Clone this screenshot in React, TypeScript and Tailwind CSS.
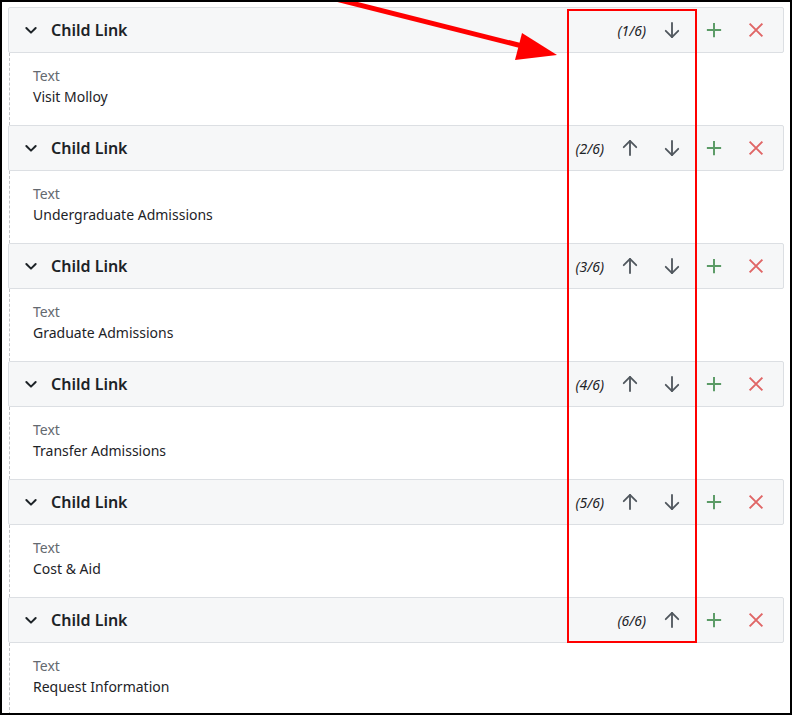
import React from "react";

const items = [
  "Visit Molloy",
  "Undergraduate Admissions",
  "Graduate Admissions",
  "Transfer Admissions",
  "Cost & Aid",
  "Request Information",
];

function ArrowUp() {
  return (
    <svg width="20" height="20" viewBox="0 0 24 24" fill="none" stroke="#50575e" strokeWidth="2.2" strokeLinecap="round" strokeLinejoin="round">
      <path d="M12 20.5V3.5" />
      <path d="M4.5 11l7.5-7.5 7.5 7.5" />
    </svg>
  );
}
function ArrowDown() {
  return (
    <svg width="20" height="20" viewBox="0 0 24 24" fill="none" stroke="#50575e" strokeWidth="2.2" strokeLinecap="round" strokeLinejoin="round">
      <path d="M12 3.5v17" />
      <path d="M4.5 13l7.5 7.5 7.5-7.5" />
    </svg>
  );
}
function Plus() {
  return (
    <svg width="18" height="18" viewBox="0 0 24 24" fill="none" stroke="#5b9b66" strokeWidth="2.6" strokeLinecap="butt">
      <path d="M12 2.5v19M2.5 12h19" />
    </svg>
  );
}
function Cross() {
  return (
    <svg width="18" height="18" viewBox="0 0 24 24" fill="none" stroke="#e06666" strokeWidth="2.6" strokeLinecap="butt">
      <path d="M3.5 3.5l17 17M20.5 3.5l-17 17" />
    </svg>
  );
}
function Chevron() {
  return (
    <svg width="16" height="16" viewBox="0 0 24 24" fill="none" stroke="#1d2327" strokeWidth="3" strokeLinecap="round" strokeLinejoin="round">
      <path d="M5 9l7 7 7-7" />
    </svg>
  );
}

export default function App() {
  return (
    <div
      className="relative w-[792px] h-[715px] border-2 border-black bg-white overflow-hidden"
      style={{ fontFamily: '"Noto Sans", "Open Sans", sans-serif' }}
    >
      <div className="flex flex-col px-[6px] pt-[5px]">
        {items.map((label, i) => (
          <div key={i} className="flex flex-col">
            <div className="flex h-[46px] items-center rounded-[2px] border border-[#dcdfe3] bg-[#f6f7f8]">
              <div className="flex w-[42px] items-center justify-center pl-[2px]">
                <Chevron />
              </div>
              <div className="text-[16px] font-semibold text-[#1d2327]">Child Link</div>
              <div className="flex-1" />
              <div className="mr-[5px] text-[14px] italic text-[#1d2327]">({i + 1}/6)</div>
              {i > 0 && (
                <div className="flex w-[42px] items-center justify-center">
                  <ArrowUp />
                </div>
              )}
              {i < items.length - 1 && (
                <div className="flex w-[42px] items-center justify-center">
                  <ArrowDown />
                </div>
              )}
              <div className="flex w-[42px] items-center justify-center">
                <Plus />
              </div>
              <div className="flex w-[42px] items-center justify-center mr-[6px]">
                <Cross />
              </div>
            </div>
            <div className="ml-[1px] flex h-[72px] flex-col border-l border-dashed border-[#c3c4c7] pl-[23px] pt-[12px]">
              <div className="text-[14px] leading-[21px] text-[#646970]">Text</div>
              <div className="text-[14px] leading-[21px] text-[#1d2327]">{label}</div>
            </div>
          </div>
        ))}
      </div>
      <svg className="pointer-events-none absolute left-[-2px] top-[-2px]" width="792" height="715">
        <rect x="568" y="10" width="128" height="632" fill="none" stroke="#f00" strokeWidth="2" />
        <line x1="300" y1="-10" x2="530" y2="48" stroke="#f00" strokeWidth="5" />
        <polygon points="522,33 557,55 515,60" fill="#f00" />
      </svg>
    </div>
  );
}
